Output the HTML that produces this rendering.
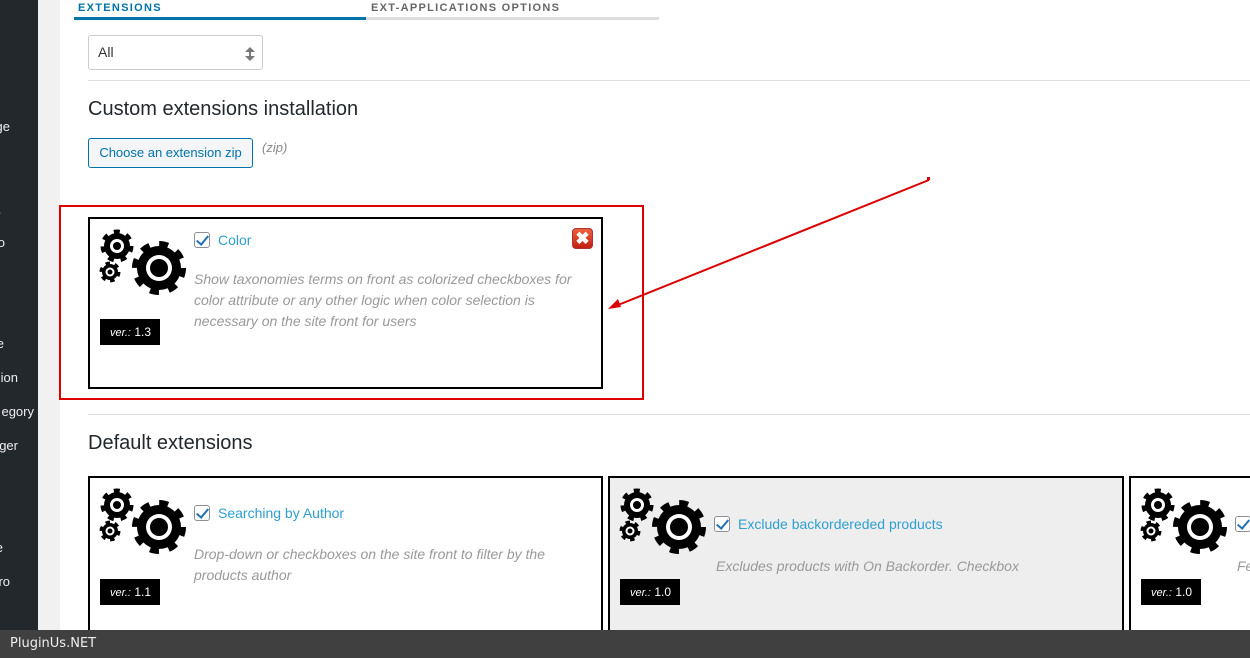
<!DOCTYPE html>
<html><head><meta charset="utf-8">
<style>
*{margin:0;padding:0;box-sizing:border-box}
body{width:1250px;height:658px;overflow:hidden;background:#fff;font-family:"Liberation Sans",sans-serif;position:relative}
.a{position:absolute}
.side{left:0;top:0;width:38px;height:658px;background:#23282d;overflow:hidden}
.gut{left:38px;top:0;width:22px;height:658px;background:#f1f1f1}
.sl{position:absolute;color:#eee;font-size:13px;white-space:nowrap}
.card{position:absolute;border:2px solid #000;background:#fff}
.ver{position:absolute;background:#000;color:#fff;font-size:12px;padding:0 0 0 10px;height:26px;line-height:26px;white-space:nowrap;overflow:hidden}
.ver i{font-style:italic;font-size:11px}
.ttl{position:absolute;color:#2e9fd0;font-size:14px;white-space:nowrap}
.cb{display:inline-block;width:16px;height:16px;border:1px solid #8c8f94;border-radius:3px;vertical-align:-3px;margin-right:8px;position:relative;background:#fff}
.cb:after{content:"";position:absolute;left:4px;top:0px;width:5px;height:10px;border:solid #2271b1;border-width:0 2.5px 2.5px 0;transform:rotate(40deg)}
.desc{position:absolute;color:#999;font-style:italic;font-size:14px;line-height:21px}
</style></head><body>
<svg width="0" height="0" style="position:absolute">
<defs>
<g id="gears">
<g transform="translate(69,49)"><circle r="22" fill="#000"/><circle r="24" fill="none" stroke="#000" stroke-width="6" stroke-dasharray="9 9.85"/><circle r="13" fill="#fff"/><circle r="9" fill="#000"/></g>
<g transform="translate(27,27)"><circle r="13" fill="#000"/><circle r="14.5" fill="none" stroke="#000" stroke-width="4" stroke-dasharray="6 7"/><circle r="7" fill="#fff"/><circle r="4" fill="#000"/></g>
<g transform="translate(20,53)"><circle r="8" fill="#000"/><circle r="9" fill="none" stroke="#000" stroke-width="3" stroke-dasharray="4.5 4.9"/><circle r="4.5" fill="#fff"/><circle r="2.5" fill="#000"/></g>
</g></defs></svg>

<div class="a side">
<div class="sl" style="top:119px;right:28px">ge</div>
<div class="sl" style="top:205px;right:36px;color:#888">·</div>
<div class="sl" style="top:235px;right:33px">o</div>
<div class="sl" style="top:336px;right:34px">e</div>
<div class="sl" style="top:370px;right:20px">ion</div>
<div class="sl" style="top:404px;right:4px">egory</div>
<div class="sl" style="top:438px;right:20px">ger</div>
<div class="sl" style="top:540px;right:35px">e</div>
<div class="sl" style="top:574px;right:28px">ro</div>
</div>
<div class="a gut"></div>

<div class="a" style="left:78px;top:2px;font-size:11px;font-weight:bold;letter-spacing:1.3px;color:#0073aa">EXTENSIONS</div>
<div class="a" style="left:74px;top:17px;width:292px;height:3px;background:#0073aa"></div>
<div class="a" style="left:371px;top:2px;font-size:11px;font-weight:bold;letter-spacing:1.3px;color:#666">EXT-APPLICATIONS OPTIONS</div>
<div class="a" style="left:366px;top:17px;width:293px;height:3px;background:#ddd"></div>

<div class="a" style="left:88px;top:35px;width:175px;height:35px;border:1px solid #ccc;border-radius:3px;font-size:14px;color:#333;padding:8px 9px">All
<svg class="a" style="right:6px;top:10px" width="12" height="16"><path d="M6 1l5 5H1z M6 15l5-5H1z" fill="#777"/><rect x="5" y="6" width="2" height="4" fill="#777"/></svg></div>
<div class="a" style="left:88px;top:80px;width:1162px;height:1px;background:#ddd"></div>
<div class="a" style="left:88px;top:98px;font-size:20px;color:#23282d">Custom extensions installation</div>
<div class="a" style="left:88px;top:138px;width:165px;height:30px;border:1px solid #0073aa;border-radius:3px;background:#f3f5f6;color:#0073aa;font-size:13px;line-height:28px;text-align:center">Choose an extension zip</div>
<div class="a" style="left:262px;top:140px;font-size:13px;font-style:italic;color:#888">(zip)</div>

<div class="a" style="left:59px;top:205px;width:585px;height:195px;border:2px solid #d00"></div>
<div class="card" style="left:88px;top:217px;width:515px;height:172px">
<svg class="a" style="left:0;top:0" width="100" height="80"><use href="#gears"/></svg>
<div class="ttl" style="left:104px;top:13px"><span class="cb"></span>Color</div>
<div class="a" style="left:482px;top:9px;width:21px;height:21px;border-radius:4px;background:linear-gradient(#f06040,#c02010);border:1px solid #a33;color:#fff;font-weight:bold;font-size:17px;line-height:19px;text-align:center">✖</div>
<div class="desc" style="left:104px;top:50px;width:400px">Show taxonomies terms on front as colorized checkboxes for color attribute or any other logic when color selection is necessary on the site front for users</div>
<div class="ver" style="left:10px;top:100px;width:60px"><i>ver.:</i> 1.3</div>
</div>
<svg class="a" style="left:0;top:0" width="1250" height="658"><line x1="929" y1="180" x2="618" y2="305" stroke="#d00" stroke-width="2"/><path d="M608 309l10-10 3 8z" fill="#d00"/><rect x="927" y="177" width="3" height="3" fill="#d00"/></svg>

<div class="a" style="left:88px;top:414px;width:1162px;height:1px;background:#ddd"></div>
<div class="a" style="left:88px;top:432px;font-size:20px;color:#23282d">Default extensions</div>

<div class="card" style="left:88px;top:476px;width:515px;height:170px">
<svg class="a" style="left:0;top:0" width="100" height="80"><use href="#gears"/></svg>
<div class="ttl" style="left:104px;top:27px"><span class="cb"></span>Searching by Author</div>
<div class="desc" style="left:104px;top:66px;width:400px">Drop-down or checkboxes on the site front to filter by the products author</div>
<div class="ver" style="left:10px;top:101px;width:60px"><i>ver.:</i> 1.1</div>
</div>
<div class="card" style="left:608px;top:476px;width:516px;height:170px;background:#eee">
<svg class="a" style="left:0;top:0" width="100" height="80"><use href="#gears"/></svg>
<div class="ttl" style="left:104px;top:38px"><span class="cb"></span>Exclude backordereded products</div>
<div class="desc" style="left:106px;top:78px;width:400px">Excludes products with On Backorder. Checkbox</div>
<div class="ver" style="left:10px;top:101px;width:60px"><i>ver.:</i> 1.0</div>
</div>
<div class="card" style="left:1129px;top:476px;width:140px;height:170px">
<svg class="a" style="left:0;top:0" width="100" height="80"><use href="#gears"/></svg>
<div class="ttl" style="left:104px;top:38px"><span class="cb"></span></div>
<div class="desc" style="left:106px;top:78px">Fe</div>
<div class="ver" style="left:10px;top:101px;width:60px"><i>ver.:</i> 1.0</div>
</div>

<div class="a" style="left:0;top:630px;width:1250px;height:28px;background:#404040;color:#eee;font-family:'DejaVu Sans',sans-serif;font-size:13px;line-height:28px;padding-left:10px">PluginUs.NET</div>
</body></html>
